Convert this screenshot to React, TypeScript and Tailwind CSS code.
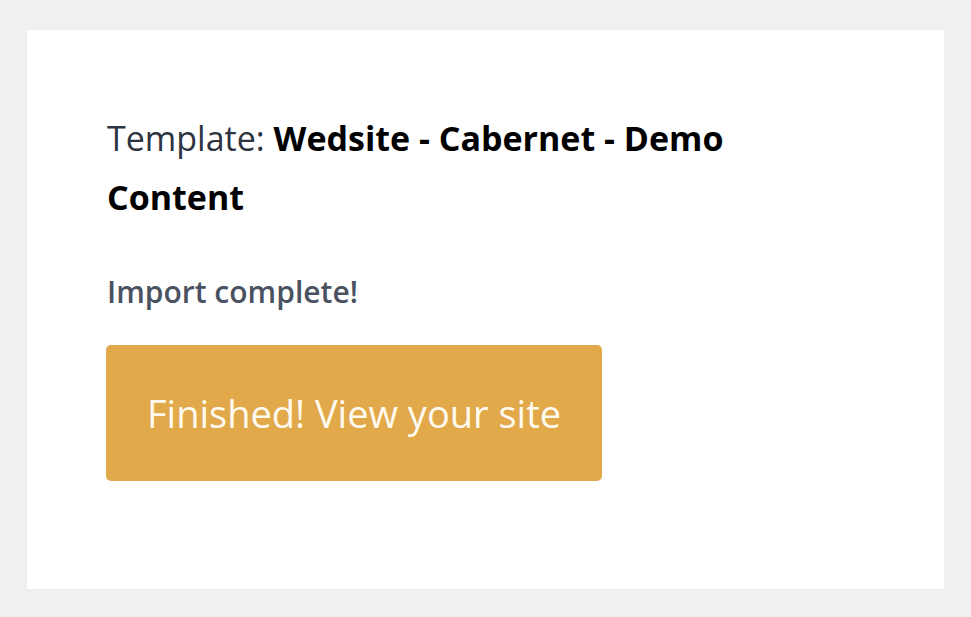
export default function App() {
  return (
    <div className="min-h-screen bg-[#f0f0f0] px-[27px] pt-[30px] pb-[28px] font-['Open_Sans',sans-serif]">
      <div className="bg-white px-[80px] pt-[79px] pb-[108px] shadow-[0_0_2px_rgba(0,0,0,0.04)]">
        <h2 className="max-w-[680px] text-[34px] leading-[59px] font-normal text-[#2d3340]">
          <span>Template: </span>
          <span className="font-bold text-black">Wedsite - Cabernet - Demo </span>
          <span className="font-bold text-black">Content</span>
        </h2>
        <p className="mt-[45px] text-[30px] leading-[40px] font-semibold text-[#4a5261]">
          Import complete!
        </p>
        <a
          href="#"
          className="mt-[33px] -ml-px inline-flex h-[136px] w-[496px] items-center justify-center rounded-[5px] bg-[#e1a94a] text-[38px] font-normal text-[#fffaf0]"
        >
          Finished! View your site
        </a>
      </div>
    </div>
  )
}
